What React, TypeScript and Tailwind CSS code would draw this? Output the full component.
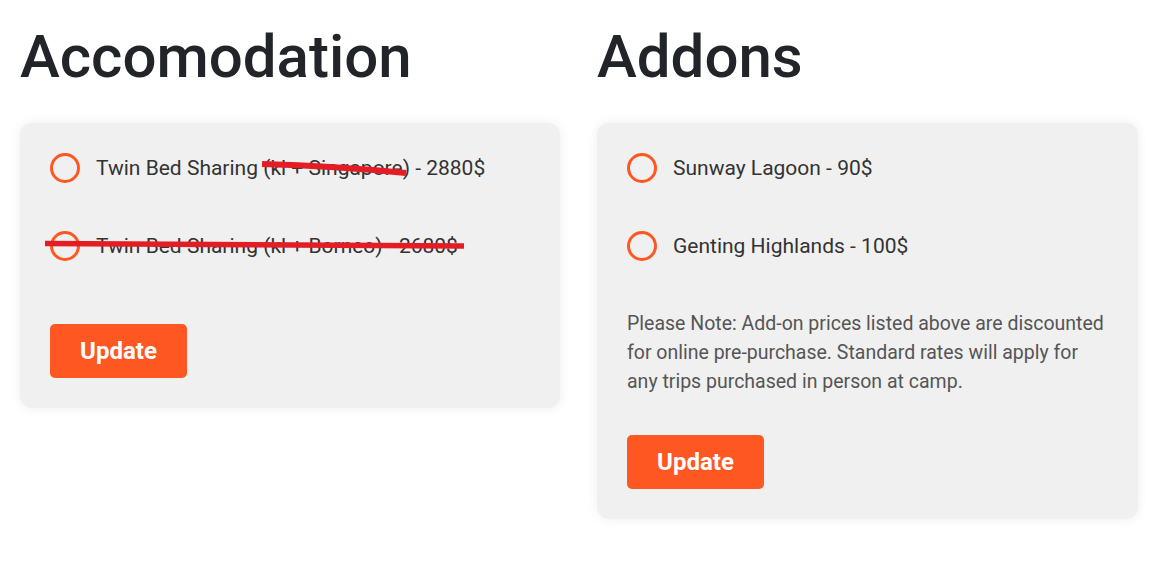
import React from "react";

type Option = { id: string; label: string };

const stays: Option[] = [
  { id: "sg", label: "Twin Bed Sharing (kl + Singapore) - 2880$" },
  { id: "bn", label: "Twin Bed Sharing (kl + Borneo) - 2680$" },
];

const addons: Option[] = [
  { id: "sunway", label: "Sunway Lagoon - 90$" },
  { id: "genting", label: "Genting Highlands - 100$" },
];

function RadioRow({ label }: { label: string }) {
  return (
    <label className="mb-[48px] flex h-[30px] items-center gap-[16px] text-[21px] text-[#333]">
      <span className="h-[30px] w-[30px] shrink-0 rounded-full border-[3px] border-[#ff5722]" />
      <span className="pt-[2px]">{label}</span>
    </label>
  );
}

function UpdateButton() {
  return (
    <button
      type="button"
      className="flex h-[54px] w-[137px] items-center justify-center rounded-[5px] bg-[#ff5722] text-[24px] font-bold text-white"
    >
      Update
    </button>
  );
}

function Card({ children }: { children: React.ReactNode }) {
  return (
    <div className="rounded-[12px] bg-[#f0f0f0] p-[30px] shadow-[0_0_12px_rgba(0,0,0,0.07)]">
      {children}
    </div>
  );
}

export default function App() {
  return (
    <div className="relative h-[568px] w-[1159px] bg-white font-['Roboto',sans-serif]">
      <div className="grid grid-cols-[540px_541px] gap-[37px] px-[20px] pt-[21px]">
        <section>
          <h1 className="mb-[30px] text-[60px] font-medium leading-[72px] text-[#212529]">Accomodation</h1>
          <Card>
            {stays.map((o) => (
              <RadioRow key={o.id} label={o.label} />
            ))}
            <div className="pt-[15px]">
              <UpdateButton />
            </div>
          </Card>
        </section>
        <section>
          <h1 className="mb-[30px] text-[60px] font-medium leading-[72px] text-[#212529]">Addons</h1>
          <Card>
            {addons.map((o) => (
              <RadioRow key={o.id} label={o.label} />
            ))}
            <p className="mb-[39px] text-[19.5px] leading-[29px] text-[#555]">
              Please Note: Add-on prices listed above are discounted for online pre-purchase. Standard rates will
              apply for any trips purchased in person at camp.
            </p>
            <UpdateButton />
          </Card>
        </section>
      </div>
      {/* hand-drawn strike marks over the first card */}
      <svg className="pointer-events-none absolute inset-0" width="1159" height="568">
        <path d="M262 164 Q335 166 406 173" stroke="#e41c24" strokeWidth="6" fill="none" />
        <path d="M45 243.5 L464 246" stroke="#e41c24" strokeWidth="5.5" fill="none" />
      </svg>
    </div>
  );
}
